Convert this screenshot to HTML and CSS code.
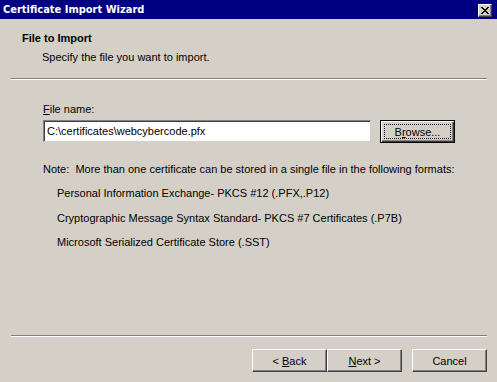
FILE: index.html
```html
<!DOCTYPE html>
<html>
<head>
<meta charset="utf-8">
<link rel="stylesheet" href="styles.css">
</head>
<body>
<div class="window">
  <div class="titlebar">
    <span class="title">Certificate Import Wizard</span>
    <span class="close"><svg width="8" height="7" viewBox="0 0 8 7"><path d="M0 0h2v1h-2zM6 0h2v1h-2zM1 1h2v1h-2zM5 1h2v1h-2zM2 2h4v1h-4zM3 3h2v1h-2zM2 4h4v1h-4zM1 5h2v1h-2zM5 5h2v1h-2zM0 6h2v1h-2zM6 6h2v1h-2z" fill="#000"/></svg></span>
  </div>
  <div class="header">
    <div class="h-title">File to Import</div>
    <div class="h-sub">Specify the file you want to import.</div>
  </div>
  <div class="sep"></div>
  <div class="content">
    <div class="label"><u>F</u>ile name:</div>
    <div class="filerow">
      <div class="input">C:\certificates\webcybercode.pfx</div>
      <div class="btn default"><span class="focus"><span>B<u>r</u>owse...</span></span></div>
    </div>
    <div class="note">Note:&nbsp; More than one certificate can be stored in a single file in the following formats:</div>
    <div class="fmt">Personal Information Exchange- PKCS #12 (.PFX,.P12)</div>
    <div class="fmt">Cryptographic Message Syntax Standard- PKCS #7 Certificates (.P7B)</div>
    <div class="fmt">Microsoft Serialized Certificate Store (.SST)</div>
  </div>
  <div class="sep bottom"></div>
  <div class="footer">
    <div class="btn"><span>&lt; <u>B</u>ack</span></div>
    <div class="btn"><span><u>N</u>ext &gt;</span></div>
    <div class="btn cancel"><span>Cancel</span></div>
  </div>
</div>
</body>
</html>
```
FILE: styles.css
```css
* { box-sizing: border-box; }
html, body { margin: 0; padding: 0; }
body {
  width: 497px;
  height: 382px;
  background: #d4d0c8;
  font-family: "Liberation Sans", Arial, sans-serif;
  font-size: 11px;
  color: #000;
  overflow: hidden;
}
.window {
  width: 497px;
  height: 382px;
  display: flex;
  flex-direction: column;
}
.titlebar {
  height: 19px;
  flex: none;
  background: #000080;
  display: flex;
  align-items: center;
  justify-content: space-between;
  padding: 0 5px 0 3px;
}
.title {
  color: #fff;
  font-weight: bold;
  font-size: 11px;
  font-family: "DejaVu Sans Condensed", "DejaVu Sans", sans-serif;
}
.close {
  width: 14px;
  height: 13px;
  margin-top: 1px;
  background: #d4d0c8;
  border-top: 1px solid #fff;
  border-left: 1px solid #fff;
  border-right: 1px solid #404040;
  border-bottom: 1px solid #404040;
  box-shadow: inset -1px -1px 0 #808080;
  display: flex;
  align-items: center;
  justify-content: center;
}
.header {
  padding: 12px 0 0 22px;
  height: 59px;
  flex: none;
}
.h-title {
  font-weight: bold;
  line-height: 14px;
}
.h-sub {
  margin-top: 5px;
  padding-left: 20px;
  line-height: 14px;
}
.sep {
  flex: none;
  margin: 0 10px 0 11px;
  border-top: 1px solid #808080;
  border-bottom: 1px solid #fff;
  height: 2px;
}
.content {
  flex: 1;
  padding: 22px 0 0 43px;
}
.label {
  line-height: 14px;
}
.filerow {
  margin-top: 4px;
  display: flex;
  gap: 9px;
}
.input {
  width: 328px;
  height: 22px;
  background: #fff;
  border-top: 1px solid #808080;
  border-left: 1px solid #808080;
  border-right: 1px solid #d4d0c8;
  border-bottom: 1px solid #d4d0c8;
  box-shadow: inset 1px 1px 0 #404040, inset -1px -1px 0 #fff;
  padding: 3px 0 0 3px;
  line-height: 14px;
}
.btn {
  width: 75px;
  height: 23px;
  background: #d4d0c8;
  border-top: 1px solid #fff;
  border-left: 1px solid #fff;
  border-right: 1px solid #404040;
  border-bottom: 1px solid #404040;
  box-shadow: inset -1px -1px 0 #808080;
  display: flex;
  align-items: center;
  justify-content: center;
  line-height: 14px;
}
.btn.default {
  border: 1px solid #000;
  box-shadow: inset 1px 1px 0 #fff, inset -1px -1px 0 #404040, inset -2px -2px 0 #808080;
  padding: 3px;
}
.btn .focus {
  flex: 1;
  align-self: stretch;
  border: 1px dotted #000;
  display: flex;
  align-items: center;
  justify-content: center;
}
.note {
  margin-top: 19px;
  line-height: 14px;
}
.fmt {
  margin-top: 10px;
  padding-left: 14px;
  line-height: 14px;
}
.fmt + .fmt {
  margin-top: 10.5px;
}
.sep.bottom {
  margin-bottom: 12px;
}
.footer {
  height: 33px;
  flex: none;
  display: flex;
  padding-left: 252px;
}
.btn.cancel {
  margin-left: 10px;
}
```
